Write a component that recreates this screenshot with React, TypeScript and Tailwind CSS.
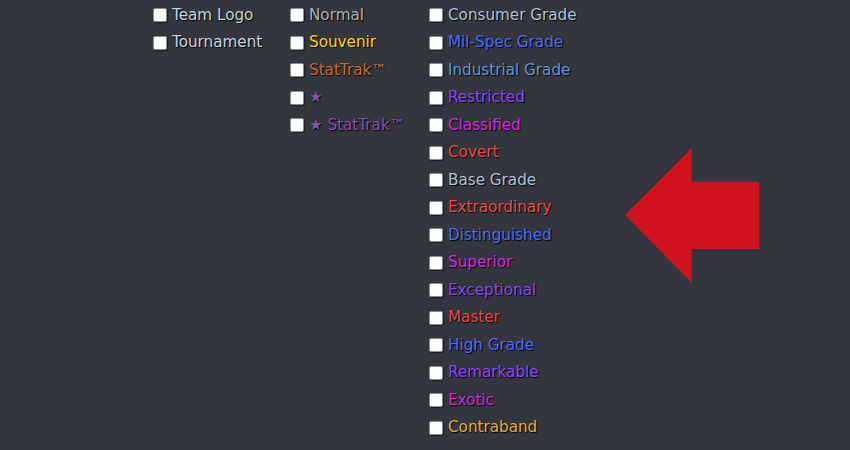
const col1 = [
  { label: "Team Logo", color: "text-[#c6d4df]" },
  { label: "Tournament", color: "text-[#c6d4df]" },
];

const col2 = [
  { label: "Normal", color: "text-[#a9b1bb]" },
  { label: "Souvenir", color: "text-[#ffd700]" },
  { label: "StatTrak™", color: "text-[#cf6a32]" },
  { label: "★", color: "text-[#8650ac]" },
  { label: "★ StatTrak™", color: "text-[#8650ac]" },
];

const col3 = [
  { label: "Consumer Grade", color: "text-[#b0c3d9]" },
  { label: "Mil-Spec Grade", color: "text-[#4b69ff]" },
  { label: "Industrial Grade", color: "text-[#5e98d9]" },
  { label: "Restricted", color: "text-[#8847ff]" },
  { label: "Classified", color: "text-[#d32ce6]" },
  { label: "Covert", color: "text-[#eb4b4b]" },
  { label: "Base Grade", color: "text-[#b0c3d9]" },
  { label: "Extraordinary", color: "text-[#eb4b4b]" },
  { label: "Distinguished", color: "text-[#4b69ff]" },
  { label: "Superior", color: "text-[#d32ce6]" },
  { label: "Exceptional", color: "text-[#8847ff]" },
  { label: "Master", color: "text-[#eb4b4b]" },
  { label: "High Grade", color: "text-[#4b69ff]" },
  { label: "Remarkable", color: "text-[#8847ff]" },
  { label: "Exotic", color: "text-[#d32ce6]" },
  { label: "Contraband", color: "text-[#e4ae39]" },
];

const Option = ({ label, color }: { label: string; color: string }) => (
  <label className="flex items-center h-[27.5px] gap-[5px] whitespace-nowrap">
    <span className="w-[14px] h-[14px] shrink-0 bg-white border border-[#8a8d92] rounded-[2px] shadow-[1px_1px_1px_rgba(0,0,0,0.5)]" />
    <span className={`${color} [text-shadow:1px_1px_1px_#000]`}>{label}</span>
  </label>
);

export default function App() {
  return (
    <div className="relative w-[850px] h-[450px] overflow-hidden bg-[#33363c] font-['DejaVu_Sans',sans-serif] text-[15.2px]">
      <div className="flex pt-[1.5px] pl-[153px]">
        <div className="flex flex-col w-[137px]">
          {col1.map((o) => (
            <Option key={o.label} {...o} />
          ))}
        </div>
        <div className="flex flex-col w-[139px]">
          {col2.map((o) => (
            <Option key={o.label} {...o} />
          ))}
        </div>
        <div className="flex flex-col">
          {col3.map((o) => (
            <Option key={o.label} {...o} />
          ))}
        </div>
      </div>
      <svg
        className="absolute left-[620px] top-[145px]"
        width="145"
        height="142"
        viewBox="620 145 145 142"
      >
        <polygon
          points="625,215 691.7,148 691.7,181.7 759.3,181.7 759.3,249 691.7,249 691.7,282.7"
          fill="#d1121f"
        />
      </svg>
    </div>
  );
}
